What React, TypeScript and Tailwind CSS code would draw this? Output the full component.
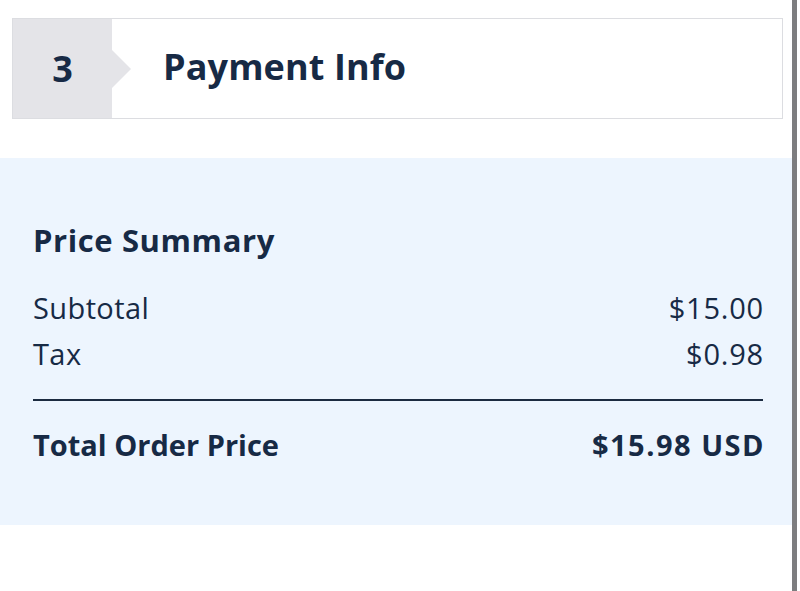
export default function App() {
  return (
    <div className="flex h-[591px] w-[800px] bg-white font-['Open_Sans','Noto_Sans',sans-serif] text-[#172a45]">
      <div className="w-[792px]">
        <div className="pl-[12px] pr-[9px] pt-[18px]">
          <div className="flex h-[101px] border border-[#dcdde1] bg-white">
            <div className="relative flex w-[99px] items-center justify-center bg-[#e4e4e8]">
              <span className="text-[36px] font-bold leading-[40px]">3</span>
              <div className="absolute left-full top-1/2 h-0 w-0 -translate-y-1/2 border-y-[19px] border-l-[19px] border-y-transparent border-l-[#e4e4e8]" />
            </div>
            <div className="flex items-center pb-[4px] pl-[51px]">
              <h1 className="text-[36px] font-bold leading-[40px] tracking-[0.1px]">Payment Info</h1>
            </div>
          </div>
        </div>

        <section className="mt-[39px] h-[367px] bg-[#edf5fe] pl-[33px] pr-[29px] pt-[64px]">
          <h2 className="text-[31px] font-bold leading-[36px] tracking-[0.6px]">Price Summary</h2>
          <div className="mt-[27px] flex justify-between text-[29px] leading-[46px]">
            <span className="tracking-[0.4px]">Subtotal</span>
            <span className="-mr-[1px] tracking-[0.8px]">$15.00</span>
          </div>
          <div className="flex justify-between text-[29px] leading-[46px]">
            <span className="tracking-[0.4px]">Tax</span>
            <span className="-mr-[1px] tracking-[0.8px]">$0.98</span>
          </div>
          <div className="mt-[22px] border-t-2 border-[#1b2b40]" />
          <div className="mt-[21px] flex justify-between text-[29px] font-bold leading-[46px]">
            <span>Total Order Price</span>
            <span className="-mr-[2px] tracking-[1.5px]">$15.98 USD</span>
          </div>
        </section>
      </div>
      <div className="w-[5px] bg-[#7d7d7f]" />
    </div>
  );
}
